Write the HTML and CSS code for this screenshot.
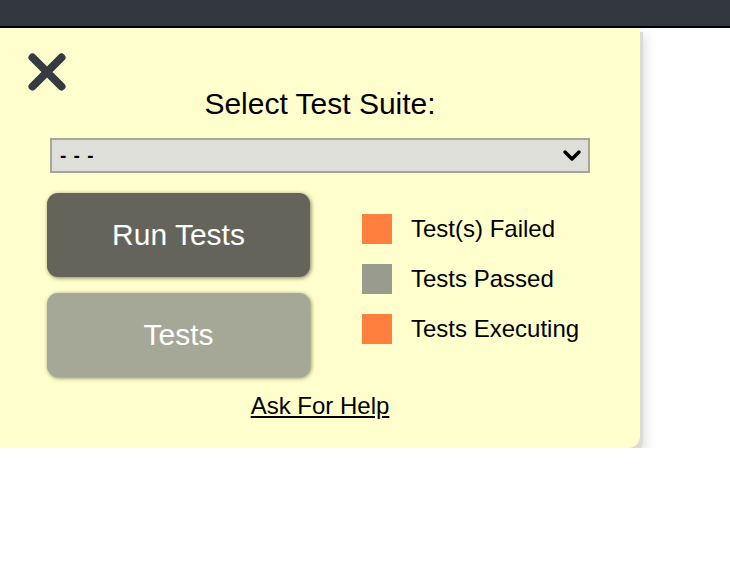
FILE: index.html
```html
<!DOCTYPE html>
<html>
<head>
<meta charset="utf-8">
<link rel="stylesheet" href="styles.css">
</head>
<body>
<div class="topbar"></div>
<div class="panel">
  <div class="close">
    <svg width="40" height="40" viewBox="0 0 40 40"><path d="M5.5 5.5 L34.5 34.5 M34.5 5.5 L5.5 34.5" stroke="#363b43" stroke-width="8" stroke-linecap="round"/></svg>
  </div>
  <h1 class="title">Select Test Suite:</h1>
  <div class="select">
    <span class="select-value">- - -</span>
    <svg class="chev" width="20" height="14" viewBox="0 0 20 14"><path d="M3 3 L10 10 L17 3" stroke="#000" stroke-width="3.4" fill="none" stroke-linecap="round" stroke-linejoin="round"/></svg>
  </div>
  <div class="main">
    <div class="buttons">
      <div class="btn btn-run">Run Tests</div>
      <div class="btn btn-tests">Tests</div>
    </div>
    <div class="legend">
      <div class="legend-row"><span class="swatch swatch-orange"></span><span class="legend-label">Test(s) Failed</span></div>
      <div class="legend-row"><span class="swatch swatch-gray"></span><span class="legend-label">Tests Passed</span></div>
      <div class="legend-row"><span class="swatch swatch-orange"></span><span class="legend-label">Tests Executing</span></div>
    </div>
  </div>
  <div class="help"><a href="#" class="help-link">Ask For Help</a></div>
</div>
</body>
</html>
```
FILE: styles.css
```css
html, body {
  margin: 0;
  padding: 0;
  background: #ffffff;
  font-family: "Liberation Sans", Arial, sans-serif;
}
.topbar {
  height: 26px;
  background: #333840;
  border-bottom: 2px solid #000;
}
.panel {
  width: 640px;
  height: 420px;
  background: #ffffcd;
  border-bottom-right-radius: 12px;
  box-shadow: 2px 5px 0 1px #dcdcd6, 4px 8px 12px 2px rgba(0, 0, 0, 0.12);
  display: flex;
  flex-direction: column;
  box-sizing: border-box;
  padding-top: 24px;
}
.close {
  margin-left: 27px;
  height: 40px;
}
.close svg { display: block; }
.title {
  margin: -3px 0 0 0;
  font-weight: normal;
  font-size: 30px;
  line-height: 30px;
  text-align: center;
  color: #000;
}
.select {
  margin: 19px 0 0 50px;
  width: 540px;
  height: 35px;
  box-sizing: border-box;
  background: #dfdfd9;
  border: 2px solid #a4a797;
  display: flex;
  align-items: center;
  justify-content: space-between;
  padding: 0 6px 0 8px;
}
.select-value {
  font-size: 19px;
  font-weight: bold;
  color: #000;
  letter-spacing: 1px;
}
.chev { display: block; }
.main {
  display: flex;
  margin-top: 20px;
}
.buttons {
  margin-left: 47px;
  display: flex;
  flex-direction: column;
  gap: 16px;
}
.btn {
  width: 263px;
  height: 84px;
  border-radius: 11px;
  display: flex;
  align-items: center;
  justify-content: center;
  color: #fff;
  font-size: 30px;
  box-shadow: 1px 1px 4px rgba(0, 0, 0, 0.5);
}
.btn-run { background: #65645a; }
.btn-tests { background: #a5a797; }
.legend {
  margin-left: 52px;
  margin-top: 21px;
  display: flex;
  flex-direction: column;
  gap: 20px;
}
.legend-row {
  display: flex;
  align-items: center;
  height: 30px;
}
.swatch {
  width: 30px;
  height: 30px;
  flex: none;
}
.swatch-orange { background: #ff7f3f; }
.swatch-gray { background: #9a9b8f; }
.legend-label {
  margin-left: 19px;
  font-size: 24px;
  color: #000;
}
.help {
  text-align: center;
  margin-top: 15px;
}
.help-link {
  color: #000;
  font-size: 24px;
  text-decoration: underline;
}
```
